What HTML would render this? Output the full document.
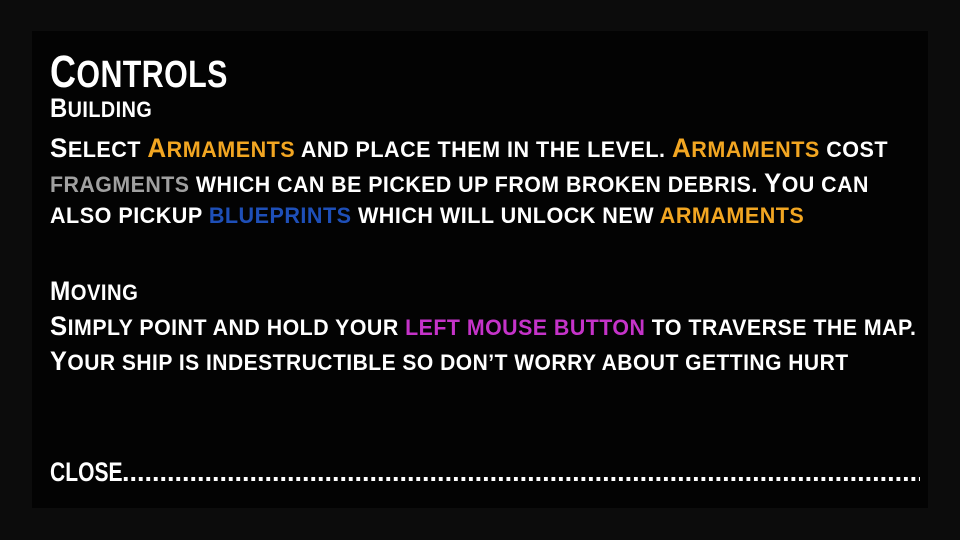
<!DOCTYPE html>
<html><head><style>
html,body{margin:0;padding:0;width:960px;height:540px;background:#0c0c0c;overflow:hidden}
.panel{position:absolute;left:32px;top:31px;width:896px;height:477px;background:#030303}
.l{position:absolute;left:50px;white-space:nowrap;font-family:"Liberation Sans",sans-serif;font-weight:bold;text-transform:uppercase;color:#fff;font-size:22px;letter-spacing:0.5px;transform-origin:0 100%;line-height:1}
.l i{font-style:normal;font-size:26.5px}
.t{font-size:38px;transform:scaleX(0.8)}.t i{font-size:45px}
.o{color:#f2a622}.g{color:#a0a0a0}.b{color:#1e4fb8}.p{color:#c533c9}
</style></head><body>
<div class="panel"></div>
<div class="l t" style="top:49px"><i>C</i>ontrols</div>
<div class="l" style="top:95px;transform:scaleX(0.9)"><i>B</i>uilding</div>
<div class="l" style="top:135px;transform:scaleX(0.98)"><i>S</i>elect <span class="o"><i>A</i>rmaments</span> and place them in the level. <span class="o"><i>A</i>rmaments</span> cost</div>
<div class="l" style="top:170px;transform:scaleX(0.97)"><span class="g">fragments</span> which can be picked up from broken debris. <i>Y</i>ou can</div>
<div class="l" style="top:205px;transform:scaleX(0.98)">also pickup <span class="b">blueprints</span> which will unlock new <span class="o">armaments</span></div>
<div class="l" style="top:278px;transform:scaleX(0.92)"><i>M</i>oving</div>
<div class="l" style="top:313px;transform:scaleX(0.97)"><i>S</i>imply point and hold your <span class="p">left mouse button</span> to traverse the map.</div>
<div class="l" style="top:348px;transform:scaleX(0.956)"><i>Y</i>our ship is indestructible so don’t worry about getting hurt</div>
<div class="l" style="top:459px;font-size:27px;letter-spacing:0;width:870px;overflow:hidden"><span style="display:inline-block;transform:scaleX(0.78);transform-origin:0 0;width:72px">CLOSE</span>......................................................................................................................................</div>
</body></html>
